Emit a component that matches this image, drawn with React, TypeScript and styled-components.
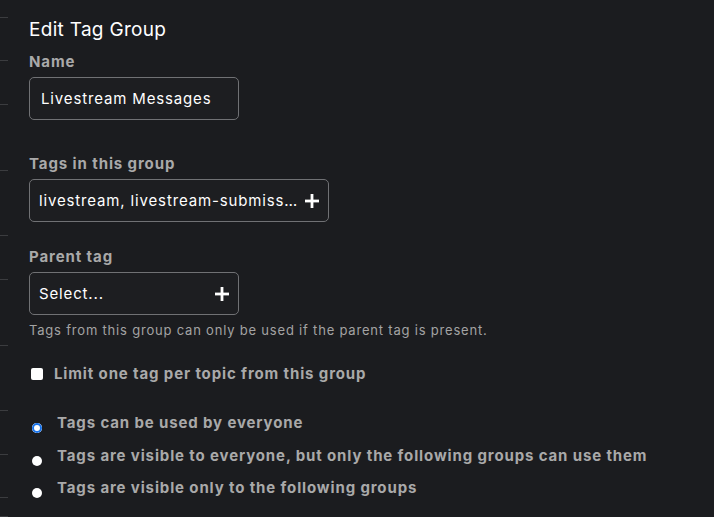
import React from "react";
import styled, { createGlobalStyle } from "styled-components";

const GlobalStyle = createGlobalStyle`
  html, body {
    margin: 0;
    background: #1b1c1f;
  }
  body {
    font-family: Inter, "Noto Sans", sans-serif;
    color: #ffffff;
  }
`;

const Page = styled.div`
  display: grid;
  grid-template-columns: 8px 1fr;
  column-gap: 21px;
  min-height: 517px;
  overflow: hidden;
`;

const Rail = styled.div`
  display: flex;
  flex-direction: column;
`;

const Tick = styled.div<{ $h: number }>`
  height: ${(p) => p.$h}px;
  flex-shrink: 0;
  box-sizing: border-box;
  border-bottom: 1px solid #3b3c3f;
`;

const Form = styled.form`
  display: flex;
  flex-direction: column;
  align-items: flex-start;
`;

const Title = styled.h2`
  margin: 18px 0 0;
  font-size: 19px;
  line-height: 24px;
  font-weight: 400;
  letter-spacing: 0.3px;
  color: #ffffff;
`;

const Label = styled.label<{ $gap: number }>`
  display: block;
  margin-top: ${(p) => p.$gap}px;
  font-size: 15px;
  line-height: 20px;
  font-weight: 700;
  letter-spacing: 0.9px;
  color: #a9a9a9;
`;

const Field = styled.div<{ $w: number }>`
  box-sizing: border-box;
  width: ${(p) => p.$w}px;
  height: 43px;
  margin-top: 5px;
  display: flex;
  align-items: center;
  gap: 6px;
  padding: 0 9px 0 9px;
  border: 1px solid #707174;
  border-radius: 5px;
  background: #1d1e21;
  font-size: 15px;
  letter-spacing: 0.85px;
  color: #ffffff;
`;

const TextInput = styled.input`
  flex: 1;
  min-width: 0;
  border: none;
  outline: none;
  background: transparent;
  padding: 0 0 0 2px;
  font: inherit;
  letter-spacing: inherit;
  color: inherit;
`;

const FieldText = styled.span`
  flex: 1;
  min-width: 0;
  white-space: nowrap;
`;

const Help = styled.p`
  margin: 6px 0 0;
  font-size: 13px;
  line-height: 18px;
  letter-spacing: 0.8px;
  color: #a3a3a3;
`;

const OptionRow = styled.label<{ $gap: number; $indent: number }>`
  display: flex;
  align-items: center;
  gap: ${(p) => p.$indent}px;
  margin-top: ${(p) => p.$gap}px;
  padding-left: 2px;
  font-size: 15px;
  line-height: 20px;
  font-weight: 700;
  letter-spacing: 0.87px;
  color: #a9a9a9;
`;

const Check = styled.input`
  appearance: none;
  margin: 0;
  width: 12px;
  height: 12px;
  border-radius: 2px;
  background: #ffffff;
  flex-shrink: 0;
`;

const Radio = styled.input`
  appearance: none;
  margin: 9px 0 0 1px;
  width: 10px;
  height: 10px;
  border-radius: 50%;
  background: #ffffff;
  flex-shrink: 0;

  &:checked {
    box-shadow: inset 0 0 0 2px #1a73e8, inset 0 0 0 3px #ffffff;
  }
`;

const PlusIcon = () => (
  <svg width="14" height="14" viewBox="0 0 14 14" aria-hidden="true">
    <rect x="5.6" y="0" width="2.8" height="14" fill="#fff" />
    <rect x="0" y="5.6" width="14" height="2.8" fill="#fff" />
  </svg>
);

const ticks = [18, 43, 44, 66, 65, 44, 66, 65, 44, 43, 19];

export default function App() {
  return (
    <>
      <GlobalStyle />
      <Page>
        <Rail>
          {ticks.map((h, i) => (
            <Tick key={i} $h={h} />
          ))}
        </Rail>
        <Form onSubmit={(e) => e.preventDefault()}>
          <Title>Edit Tag Group</Title>
          <Label $gap={10} htmlFor="tg-name">
            Name
          </Label>
          <Field $w={210}>
            <TextInput id="tg-name" defaultValue="Livestream Messages" />
          </Field>
          <Label $gap={34}>Tags in this group</Label>
          <Field $w={300}>
            <FieldText>livestream, livestream-submiss…</FieldText>
            <PlusIcon />
          </Field>
          <Label $gap={25}>Parent tag</Label>
          <Field $w={210}>
            <FieldText>Select...</FieldText>
            <PlusIcon />
          </Field>
          <Help>Tags from this group can only be used if the parent tag is present.</Help>
          <OptionRow $gap={25} $indent={11}>
            <Check type="checkbox" />
            Limit one tag per topic from this group
          </OptionRow>
          <OptionRow $gap={29} $indent={15}>
            <Radio type="radio" name="vis" defaultChecked />
            Tags can be used by everyone
          </OptionRow>
          <OptionRow $gap={13} $indent={15}>
            <Radio type="radio" name="vis" />
            Tags are visible to everyone, but only the following groups can use them
          </OptionRow>
          <OptionRow $gap={12} $indent={15}>
            <Radio type="radio" name="vis" />
            Tags are visible only to the following groups
          </OptionRow>
        </Form>
      </Page>
    </>
  );
}
